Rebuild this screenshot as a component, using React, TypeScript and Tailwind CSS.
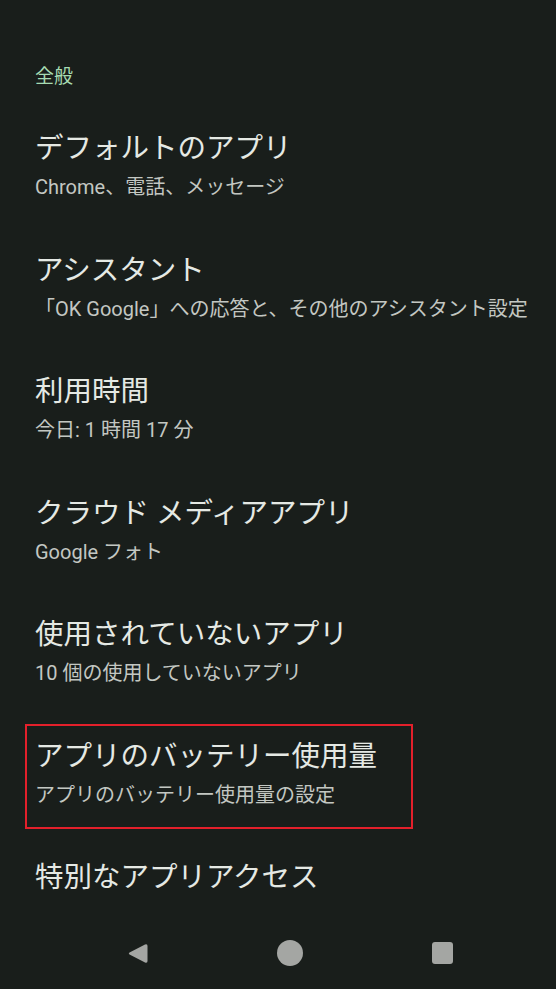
import React from 'react';

interface SettingItem {
  title: string;
  summary?: string;
  highlighted?: boolean;
}

const items: SettingItem[] = [
  { title: 'デフォルトのアプリ', summary: 'Chrome、電話、メッセージ' },
  { title: 'アシスタント', summary: '「OK Google」への応答と、その他のアシスタント設定' },
  { title: '利用時間', summary: '今日: 1 時間 17 分' },
  { title: 'クラウド メディアアプリ', summary: 'Google フォト' },
  { title: '使用されていないアプリ', summary: '10 個の使用していないアプリ' },
  { title: 'アプリのバッテリー使用量', summary: 'アプリのバッテリー使用量の設定', highlighted: true },
  { title: '特別なアプリアクセス' },
];

const font = { fontFamily: 'Roboto, "Noto Sans CJK JP", "Noto Sans", sans-serif' };

const SettingRow: React.FC<SettingItem> = ({ title, summary, highlighted }) => (
  <div className="relative px-[35px] pb-[53.5px]">
    {highlighted && (
      <div className="absolute top-[-15px] left-[25px] w-[388px] h-[105px] border-2 border-[#e3202b] pointer-events-none" />
    )}
    <div className="text-[28.5px] leading-[36px] text-[#e5e9e4] whitespace-nowrap">{title}</div>
    {summary && (
      <div className="mt-2 text-[20px] leading-[24px] text-[#c3c7c2] whitespace-nowrap">{summary}</div>
    )}
  </div>
);

export default function App() {
  return (
    <div className="w-[556px] h-[989px] bg-[#191e1b] flex flex-col overflow-hidden" style={font}>
      <div className="flex-1 overflow-hidden pt-[65px]">
        <div className="px-[35px] text-[19px] leading-[24px] text-[#a6dbb2]">全般</div>
        <div className="mt-[42px]">
          {items.map((item) => (
            <SettingRow key={item.title} {...item} />
          ))}
        </div>
      </div>

      {/* system navigation bar */}
      <div className="h-[72px] shrink-0 flex items-center pl-[118px] gap-[112px]">
        <div className="w-10 flex justify-center">
          <svg width="24" height="25" viewBox="0 0 24 25">
            <path
              d="M19 3.5 Q21.5 2.5 21.5 5 L21.5 20 Q21.5 22.5 19 21.5 L3.5 13.6 Q2 12.5 3.5 11.4 Z"
              fill="#a4a6a3"
            />
          </svg>
        </div>
        <div className="w-10 flex justify-center">
          <div className="w-[26px] h-[26px] rounded-full bg-[#a4a6a3]" />
        </div>
        <div className="w-10 flex justify-center">
          <div className="w-[21px] h-[22px] rounded-[3px] bg-[#a4a6a3]" />
        </div>
      </div>
    </div>
  );
}
